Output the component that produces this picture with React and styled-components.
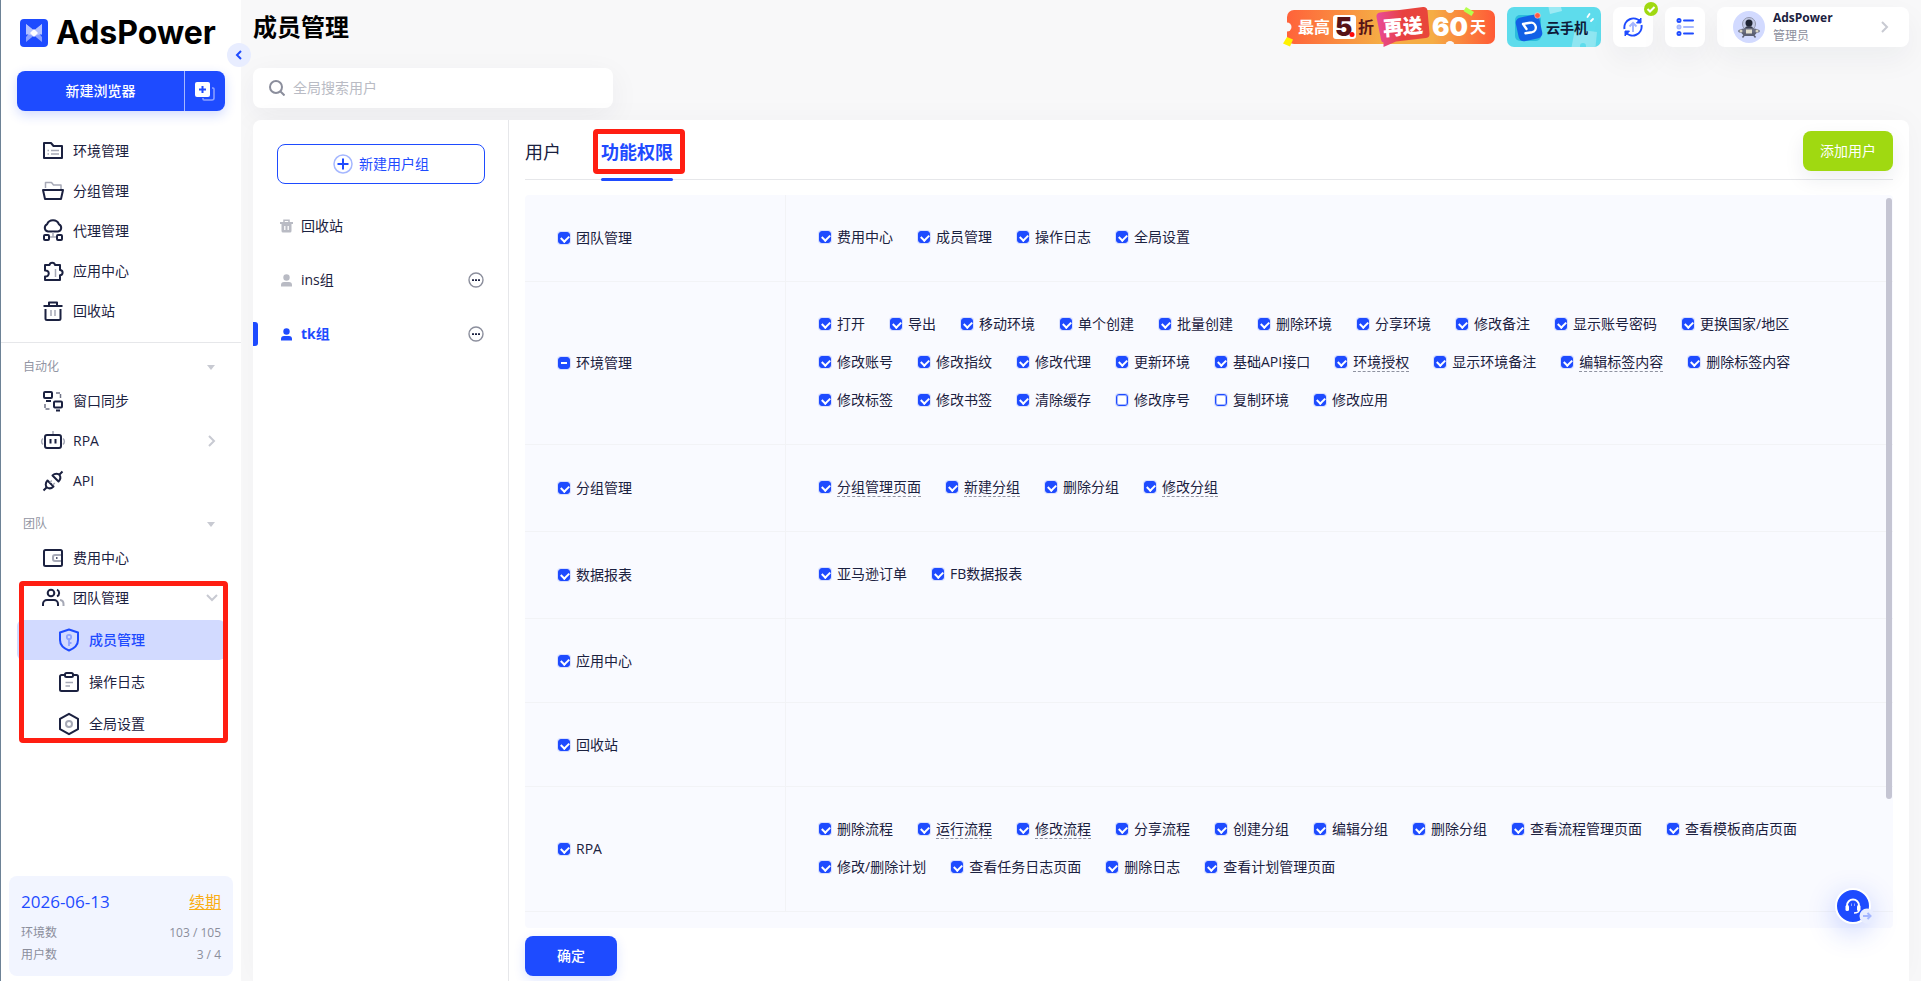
import { useState } from "react";
import styled, { createGlobalStyle, css } from "styled-components";

const BLUE = "#1e4bff";
const DARK = "#1b2140";
const GREY = "#a6a9b6";

const GlobalStyle = createGlobalStyle`
    * {
        box-sizing: border-box;
    }
    body {
        margin: 0;
        background-color: #f8f8f9;
        color: ${DARK};
        font-family: "Open Sans", "Noto Sans CJK SC", sans-serif;
        font-size: 14px;
        line-height: 20px;
    }
    button, input {
        font: inherit;
    }
    button {
        padding: 0;
        border: none;
        background: none;
        color: inherit;
        cursor: pointer;
    }
    a {
        color: inherit;
        text-decoration: none;
    }
    svg {
        display: block;
        flex: none;
    }
`;

const Page = styled.div`
    display: flex;
    height: 100vh;
`;

/* ---------- sidebar ---------- */

const Sidebar = styled.aside`
    position: relative;
    display: flex;
    flex-direction: column;
    width: 241px;
    flex: none;
    background-color: white;
    border-left: 1px solid #6d8296;
`;

const Brand = styled.div`
    display: flex;
    align-items: center;
    gap: 8px;
    height: 71px;
    padding: 0 19px 5px;
`;

const BrandName = styled.span`
    font-family: Inter, sans-serif;
    font-size: 32px;
    font-weight: 700;
    line-height: 40px;
    color: black;
`;

const Collapse = styled.button`
    position: absolute;
    top: 43px;
    right: -10px;
    z-index: 2;
    display: flex;
    align-items: center;
    justify-content: center;
    width: 24px;
    height: 24px;
    border-radius: 50%;
    background-color: #e8edff;
`;

const NewBrowser = styled.div`
    display: flex;
    height: 40px;
    margin: 0 16px 20px;
    border-radius: 8px;
    background-color: ${BLUE};
    color: white;
    box-shadow: 0 4px 12px rgba(30, 75, 255, 0.2);
`;

const NewBrowserMain = styled.button`
    flex: 1;
    font-weight: 500;
`;

const NewBrowserBatch = styled.button`
    display: flex;
    align-items: center;
    justify-content: center;
    width: 41px;
    border-left: 1px solid #a5b7ff;
`;

const NavItem = styled.a`
    display: flex;
    align-items: center;
    gap: 10px;
    height: 40px;
    padding: 0 20px 0 42px;
`;

const NavLabel = styled.span`
    flex: 1;
`;

const Divider = styled.hr`
    width: 100%;
    margin: 11px 0 1px;
    border: none;
    border-top: 1px solid #e6e7ea;
`;

const SectionTitle = styled.button`
    display: flex;
    align-items: center;
    justify-content: space-between;
    height: 28px;
    margin-top: 9px;
    padding: 0 26px 0 22px;
    font-size: 12px;
    color: #9295a3;
`;

const SubMenu = styled.div`
    display: flex;
    flex-direction: column;
    gap: 2px;
    padding: 2px 16px;
`;

const SubItem = styled.a`
    display: flex;
    align-items: center;
    gap: 10px;
    height: 40px;
    padding-left: 42px;
    border-radius: 6px;
    ${({ $active }) => $active && css`
        background-color: #d2daff;
        color: ${BLUE};
        font-weight: 500;
    `}
`;

const TeamGroup = styled.div`
    position: relative;
`;

const RedFrame = styled.span`
    position: absolute;
    inset: ${({ $inset }) => $inset};
    border: 5px solid #ff1e12;
    border-radius: 4px;
    pointer-events: none;
`;

const PlanCard = styled.div`
    margin: auto 8px 5px;
    padding: 15px 12px 10px;
    border-radius: 8px;
    background-color: #f2f5ff;
    font-size: 12px;
    line-height: 22px;
    color: #8b8e9c;
`;

const PlanRow = styled.div`
    display: flex;
    justify-content: space-between;
`;

const PlanHead = styled(PlanRow)`
    margin-bottom: 9px;
    font-size: 17px;
    color: ${BLUE};
`;

const Renew = styled.a`
    font-size: 16px;
    color: #faad14;
    text-decoration: underline;
`;

/* ---------- header ---------- */

const Main = styled.main`
    display: flex;
    flex-direction: column;
    flex: 1;
    min-width: 0;
    padding: 0 12px;
`;

const Header = styled.header`
    display: flex;
    align-items: center;
    gap: 12px;
    height: 54px;
`;

const Title = styled.h1`
    flex: 1;
    margin: 0;
    font-size: 24px;
    line-height: 32px;
    font-weight: 700;
    color: black;
`;

const HeaderButton = styled.button`
    position: relative;
    display: flex;
    align-items: center;
    justify-content: center;
    width: 40px;
    height: 40px;
    border-radius: 8px;
    background-color: white;
    box-shadow: 0 12px 30px rgba(27, 33, 64, 0.05);
`;

const OkBadge = styled.span`
    position: absolute;
    top: -5px;
    right: -5px;
`;

const Profile = styled.button`
    display: flex;
    align-items: center;
    gap: 8px;
    width: 192px;
    height: 40px;
    padding: 0 20px 0 16px;
    border-radius: 8px;
    background-color: white;
    box-shadow: 0 12px 30px rgba(27, 33, 64, 0.05);
    text-align: left;
`;

const ProfileText = styled.span`
    display: flex;
    flex-direction: column;
    flex: 1;
    font-size: 12px;
    line-height: 18px;
    color: #8b8e9c;
    strong {
        color: ${DARK};
    }
`;

const Search = styled.label`
    display: flex;
    align-items: center;
    gap: 8px;
    width: 360px;
    height: 40px;
    margin: 14px 0 12px;
    padding: 0 16px;
    border-radius: 8px;
    background-color: white;
    box-shadow: 0 8px 30px rgba(27, 33, 64, 0.06);
    input {
        flex: 1;
        min-width: 0;
        padding: 0;
        border: none;
        outline: none;
        background: none;
    }
    input::placeholder {
        color: #b9bbc4;
    }
`;

/* ---------- body ---------- */

const Panel = styled.section`
    display: flex;
    flex: 1;
    min-height: 0;
    border-radius: 8px 8px 0 0;
    background-color: white;
    box-shadow: 0 0 30px rgba(27, 33, 64, 0.03);
`;

const Groups = styled.div`
    width: 256px;
    flex: none;
    padding: 24px 0;
    border-right: 1px solid #e6e7ea;
`;

const NewGroup = styled.button`
    display: flex;
    align-items: center;
    justify-content: center;
    gap: 6px;
    width: 208px;
    height: 40px;
    margin: 0 24px 15px;
    border: 1px solid ${BLUE};
    border-radius: 8px;
    color: ${BLUE};
`;

const GroupItem = styled.div`
    position: relative;
    display: flex;
    align-items: center;
    gap: 8px;
    height: 54px;
    padding: 0 24px 0 27px;
    ${({ $active }) => $active && css`
        color: ${BLUE};
        font-weight: 700;
        &::before {
            content: "";
            position: absolute;
            left: 0;
            width: 5px;
            height: 24px;
            border-radius: 0 3px 3px 0;
            background-color: ${BLUE};
        }
    `}
`;

const Content = styled.div`
    display: flex;
    flex-direction: column;
    flex: 1;
    min-width: 0;
    padding: 0 16px 5px;
`;

const TabBar = styled.div`
    display: flex;
    align-items: center;
    gap: 40px;
    height: 60px;
    margin-bottom: 15px;
    padding-top: 4px;
    border-bottom: 1px solid #e6e7ea;
`;

const Tab = styled.button`
    position: relative;
    font-size: 18px;
    line-height: 26px;
    ${({ $active }) => $active && css`
        color: ${BLUE};
        font-weight: 700;
        &::after {
            content: "";
            position: absolute;
            left: 0;
            right: 0;
            bottom: -16px;
            height: 3px;
            border-radius: 2px;
            background-color: ${BLUE};
        }
    `}
`;

const AddUser = styled.button`
    width: 90px;
    height: 40px;
    margin-left: auto;
    margin-bottom: 1px;
    border-radius: 8px;
    background-color: #a0d911;
    color: white;
    box-shadow: 0 8px 20px rgba(27, 33, 64, 0.08);
`;

const Permissions = styled.div`
    position: relative;
    flex: 1;
    min-height: 0;
    overflow: hidden;
    border-radius: 4px;
    background-color: #f9faff;
`;

const Thumb = styled.div`
    position: absolute;
    top: 3px;
    right: 1px;
    width: 6px;
    height: 82%;
    border-radius: 3px;
    background-color: #c5c5d3;
`;

const Options = styled.div`
    display: flex;
    flex-wrap: wrap;
    column-gap: 25px;
`;

const CheckLabel = styled.label`
    display: flex;
    align-items: center;
    gap: 6px;
    height: 38px;
    white-space: nowrap;
`;

const Table = styled.table`
    width: 100%;
    border-collapse: separate;
    border-spacing: 0;
    th, td {
        height: 84px;
        border-bottom: 1px solid #f2f3f6;
        font-weight: 400;
        text-align: left;
    }
    th {
        width: 261px;
        padding: 0 33px;
        border-right: 1px solid #f2f3f6;
    }
    td {
        padding: 23px 32px 25px 33px;
    }
`;

const Check = styled.input`
    position: relative;
    appearance: none;
    width: 12px;
    height: 12px;
    margin: 0;
    border: 1px solid ${BLUE};
    border-radius: 3px;
    background-color: white;
    box-shadow: 0 0 0 1px rgba(30, 75, 255, 0.15), inset 0 0 0 1px rgba(30, 75, 255, 0.4);
    &:checked, &:indeterminate {
        background-color: ${BLUE};
    }
    &:checked::after {
        content: "";
        position: absolute;
        left: 3px;
        top: 1px;
        width: 4px;
        height: 6px;
        border: solid white;
        border-width: 0 2px 2px 0;
        transform: rotate(45deg);
    }
    &:indeterminate::after {
        content: "";
        position: absolute;
        left: 2px;
        top: 4px;
        width: 6px;
        height: 2px;
        background-color: white;
    }
`;

const CheckText = styled.span`
    border-bottom: 1px dashed ${({ $hint }) => ($hint ? "#8f92a0" : "transparent")};
    border-top: 1px solid transparent;
    line-height: 18px;
`;

const Confirm = styled.button`
    width: 92px;
    height: 40px;
    margin-top: 8px;
    border-radius: 8px;
    background-color: ${BLUE};
    color: white;
    font-weight: 500;
    box-shadow: 0 4px 12px rgba(30, 75, 255, 0.15);
`;

const Support = styled.button`
    position: fixed;
    right: 50px;
    bottom: 57px;
    width: 36px;
    height: 36px;
    border: 2px solid white;
    border-radius: 50%;
    background-color: ${BLUE};
    box-shadow: 0 8px 28px rgba(30, 75, 255, 0.25);
    svg {
        position: absolute;
        left: 0;
        top: 0;
    }
`;

/* ---------- icons ---------- */

const shapes = {
    env: (
        <>
            <path d="M1 2h7l2.500 3H19v12H1z" />
            <path d="M8 9.500h8M8 13h8M4.500 9.500h1.500M4.500 13h1.500" stroke={GREY} strokeWidth="1.500" />
        </>
    ),
    folder: (
        <>
            <path d="M2.500 7V1.500h6l2 2.500h7.500V8" stroke={GREY} strokeWidth="1.500" />
            <path d="M0 9h20l-2 9H2z" />
        </>
    ),
    proxy: (
        <>
            <path d="M5 10.500a3.800 3.800 0 0 1-1-7.200 6.500 6.500 0 0 1 12 0 3.800 3.800 0 0 1-1 7.200z" />
            <path d="M10 11v5M7 16h6" stroke={GREY} strokeWidth="1.500" />
            <rect x="1" y="14" width="5" height="5" rx="1" />
            <rect x="14" y="14" width="5" height="5" rx="1" />
        </>
    ),
    app: (
        <>
            <path d="M2 4h4.500a2.800 2.800 0 0 1 5.500 0H17v5a2.600 2.600 0 0 1 0 5.200V19H2v-3.500c5 .5 5-6.500 0-6z" />
            <path d="M12.500 8v8" stroke={GREY} strokeWidth="1.500" />
        </>
    ),
    bin: (
        <>
            <path d="M0.500 5h19M6 4V1.500h8V4M2.500 8v9.500A1.500 1.500 0 0 0 4 19h12a1.500 1.500 0 0 0 1.500-1.500V8" />
            <path d="M8 9v6M12 9v6" stroke={GREY} strokeWidth="1.500" />
        </>
    ),
    sync: (
        <>
            <rect x="1" y="1" width="8" height="6" rx="1" />
            <rect x="11" y="10.500" width="8" height="6" rx="1" />
            <path d="M3 10h5M13 19.500h4" />
            <path d="M13 2h4.500v5M2 13v5h5" stroke="#6f7386" strokeDasharray="4 1.500" strokeWidth="1.500" />
        </>
    ),
    rpa: (
        <>
            <path d="M10 0v4M0 7.500a4 4 0 0 0 0 6M20 7.500a4 4 0 0 1 0 6" stroke={GREY} strokeWidth="1.500" />
            <rect x="2" y="4" width="16" height="13" rx="2" />
            <path d="M7.500 8v4.500M12.500 8v4.500" />
        </>
    ),
    api: (
        <>
            <path d="M0.500 19.500l3-3M16.500 3.500l3-3" />
            <path d="M4.500 9.500l6 6c-2.500 2.500-5 2-6.500 1s-2-4.500.5-7z" />
            <path d="M9.500 4.500l6 6c2.500-2.500 2-5 1-6.500s-4.500-2-7 .5z" />
            <path d="M6.800 11.500l2-2M9.800 14l2-2" stroke={GREY} strokeWidth="1.500" />
        </>
    ),
    wallet: (
        <>
            <rect x="1" y="2" width="18" height="16" rx="1.500" />
            <path d="M18 7h-6a2 2 0 0 0-2 2v2a2 2 0 0 0 2 2h6" stroke={GREY} />
            <path d="M13 10h1.500" strokeWidth="1.500" />
        </>
    ),
    team: (
        <>
            <circle cx="8" cy="5" r="3.300" />
            <path d="M0 18v-2a4 4 0 0 1 4-4h7a4 4 0 0 1 4 4v2M14 1.700a3.600 3.600 0 0 1 0 6.600" />
            <path d="M17 12a4 4 0 0 1 3.500 4v2" stroke={GREY} />
        </>
    ),
    member: (
        <>
            <path d="M10-.5l9 3v7.500c0 5-4 8.500-9 10.500-5-2-9-5.500-9-10.500V2.500z" />
            <g stroke="#8ea3ff" strokeWidth="1.800">
                <circle cx="10" cy="7" r="2.200" />
                <path d="M10 9.500V16M10 13h2.500" />
            </g>
        </>
    ),
    log: (
        <>
            <path d="M6 3H2.500A1.500 1.500 0 0 0 1 4.500v13A1.500 1.500 0 0 0 2.500 19h15a1.500 1.500 0 0 0 1.500-1.500v-13A1.500 1.500 0 0 0 17.500 3H14" />
            <rect x="6" y="1" width="8" height="4" rx="1.500" />
            <path d="M6.500 10.500h7.500M6.500 14h4.500" stroke={GREY} strokeWidth="1.500" />
        </>
    ),
    setting: (
        <>
            <path d="M10-.2l9 5v10.400l-9 5-9-5V4.800z" />
            <circle cx="10" cy="10" r="3" stroke={GREY} />
        </>
    ),
};

const Icon = ({ name, color = DARK }) => (
    <svg width="20" height="20" viewBox="0 0 20 20" overflow="visible" fill="none" stroke={color} strokeWidth="2" strokeLinejoin="round">
        {shapes[name]}
    </svg>
);

const Chevron = ({ d, width, height, color = "#c8cad2" }) => (
    <svg width={width} height={height} viewBox={`0 0 ${width} ${height}`} fill="none" stroke={color} strokeWidth="2">
        <path d={d} />
    </svg>
);

const Caret = () => (
    <svg width="8" height="5" viewBox="0 0 8 5" fill="#c8cad2"><path d="M0 0h8L4 5z" /></svg>
);

// butterfly made of two translucent wings folded over each other
const Logo = () => (
    <svg width="28" height="28" viewBox="0 0 28 28">
        <rect width="28" height="28" rx="4" fill={BLUE} />
        <path d="M6 5l8 6.500L22 5v11l-3.500-2L22 18v5l-8-6.500L6 23v-5l3.500-4L6 16z" fill="#8aa0ff" />
        <path d="M6 5l8 6.500L22 5v10l-8 2-8-2z" fill="#b4c2ff" />
        <path d="M10 14l4-4 4 4-4 4z" fill="white" />
    </svg>
);

const PersonIcon = ({ color }) => (
    <svg width="13" height="13" viewBox="0 0 13 13" fill={color}>
        <circle cx="6.500" cy="3.500" r="3.200" />
        <path d="M1 12.500v-1.500a3 3 0 0 1 3-3h5a3 3 0 0 1 3 3v1.500z" />
    </svg>
);

const TrashIcon = () => (
    <svg width="13" height="14" viewBox="0 0 13 14" fill="none" stroke="#b9bbc4">
        <path d="M4 3V1.200h5V3" strokeWidth="1.500" />
        <path d="M0 4h13" strokeWidth="2" />
        <path d="M1.500 4.500h10V12a1.500 1.500 0 0 1-1.500 1.500H3A1.500 1.500 0 0 1 1.500 12z" fill="#b9bbc4" stroke="none" />
        <path d="M4.800 7v4M8.200 7v4" stroke="white" strokeWidth="1.300" />
    </svg>
);

const MoreIcon = () => (
    <svg width="16" height="16" viewBox="0 0 16 16">
        <circle cx="8" cy="8" r="7" fill="none" stroke="#8b8e9c" strokeWidth="1.400" />
        <path d="M4 7.200h2v1.700H4zM7 7.200h2v1.700H7zM10 7.200h2v1.700h-2z" fill={DARK} />
    </svg>
);

const PromoBanner = () => (
    <svg width="212" height="40" viewBox="0 0 212 40" overflow="visible" fontFamily="Inter, 'Noto Sans CJK SC', sans-serif" fontWeight="700">
        <defs>
            <linearGradient id="bar">
                <stop offset="0" stopColor="#ff623a" />
                <stop offset="0.450" stopColor="#f5ad45" />
                <stop offset="0.700" stopColor="#f5ad45" />
                <stop offset="1" stopColor="#ff5a36" />
            </linearGradient>
            <linearGradient id="tag">
                <stop offset="0" stopColor="#e84a9c" />
                <stop offset="0.500" stopColor="#e8413f" />
                <stop offset="1" stopColor="#e8463a" />
            </linearGradient>
        </defs>
        <rect x="4" y="3" width="208" height="34" rx="7" fill="url(#bar)" />
        <g fill="#f8f8f9">
            <circle cx="4" cy="20" r="4.500" />
            <circle cx="167" cy="1.500" r="4.500" />
            <circle cx="167" cy="38.500" r="4.500" />
        </g>
        <path d="M4 30l6 2.500-3 7-7-3z" fill="#fff200" />
        <path d="M183 0l8 5-2.500 4-8-5z" fill="#b6ff4d" />
        <text x="15" y="26" fontSize="16" fill="white">最高</text>
        <rect x="50" y="8" width="23" height="24" rx="3" fill="white" />
        <text x="52" y="29" fontSize="26" fontWeight="900" fill="#571317">5</text>
        <circle cx="69" cy="27.500" r="2.500" fill="#ff0a0a" />
        <text x="75" y="26" fontSize="16" fill="#571317">折</text>
        <path d="M97 5.500l43-5.500q4-.3 4.500 3.500l2 23q.3 4-3.500 4.500l-30 3.500-12.500 5.500v-4.500q-2 0-2.500-3L93.500 10q-.5-4 3.500-4.500z" fill="url(#tag)" />
        <text x="100" y="27" fontSize="20" fontWeight="900" fill="white" transform="rotate(-5 120 20)">再送</text>
        <text x="149" y="29" fontSize="26" fontWeight="900" fill="white">60</text>
        <text x="187" y="26" fontSize="16" fill="white">天</text>
    </svg>
);

const CloudPhone = () => (
    <svg width="94" height="40" viewBox="0 0 94 40">
        <defs>
            <clipPath id="card"><rect width="94" height="40" rx="7" /></clipPath>
        </defs>
        <g clipPath="url(#card)">
            <rect width="94" height="40" fill="#5edcec" />
            <path d="M41-2l12-2 2 8-12 3z" fill="#9ceaf4" />
            <path d="M68 22l22 3-2 20-24-2z" fill="#8fe6f1" />
            <circle cx="76" cy="39" r="3" fill="#5edcec" />
        </g>
        <rect x="8" y="8" width="26" height="26" rx="5" fill="#2bbcdd" />
        <rect x="10" y="9" width="24" height="24" rx="5" fill="#1260e6" transform="rotate(-12 22 21)" />
        <path d="M16 17l7-1.200a4.800 4.800 0 0 1 2 9.400l-6.500 1M16 17l3.500 5" fill="none" stroke="white" strokeWidth="2.400" strokeLinecap="round" strokeLinejoin="round" />
        <circle cx="30.500" cy="8.500" r="2.800" fill="#ff5a44" stroke="#ffd5cf" strokeWidth=".6" />
        <text x="39" y="26" fontSize="14" fontWeight="700" fontFamily="'Noto Sans CJK SC', sans-serif" fill="#0d1b3a">云手机</text>
        <path d="M80.500 10l2-3M84 14l2-2" stroke="white" strokeWidth="1.800" strokeLinecap="round" />
    </svg>
);

const Avatar = () => (
    <svg width="32" height="32" viewBox="0 0 32 32">
        <circle cx="16" cy="16" r="16" fill="#d2daff" />
        <circle cx="16" cy="13" r="6.500" fill="#c3cae6" stroke="#8f94aa" strokeWidth="1" />
        <circle cx="16" cy="12" r="3.500" fill="#1f2433" />
        <path d="M11 20c.5-4 2.500-5 5-5s4.500 1 5 5z" fill="#3a3f50" />
        <ellipse cx="16" cy="20" rx="11" ry="3" fill="#6b6f82" />
        <path d="M8 21.500h16l-3 3.500H11z" fill="#5c6072" />
        <path d="M13 18.500h6v4h-6z" fill="#e3dfcf" />
        <circle cx="8" cy="20" r="1.500" fill="#d9d4c2" />
        <circle cx="24" cy="20" r="1.500" fill="#d9d4c2" />
        <path d="M11 24.500l-1.500 2M21 24.500l1.500 2" stroke="#5c6072" strokeWidth="1.500" />
    </svg>
);

/* ---------- data ---------- */

const mainNav = [
    ["env", "环境管理"],
    ["folder", "分组管理"],
    ["proxy", "代理管理"],
    ["app", "应用中心"],
    ["bin", "回收站"],
];

const subNav = [
    ["member", "成员管理"],
    ["log", "操作日志"],
    ["setting", "全局设置"],
];

// "*" after a name: has a hint, "-" after a name: not granted
const permissions = [
    ["团队管理", "费用中心 成员管理 操作日志 全局设置"],
    ["环境管理", "打开 导出 移动环境 单个创建 批量创建 删除环境 分享环境 修改备注 显示账号密码 更换国家/地区 修改账号 修改指纹 修改代理 更新环境 基础API接口 环境授权* 显示环境备注 编辑标签内容* 删除标签内容 修改标签 修改书签 清除缓存 修改序号- 复制环境- 修改应用"],
    ["分组管理", "分组管理页面* 新建分组* 删除分组 修改分组*"],
    ["数据报表", "亚马逊订单 FB数据报表"],
    ["应用中心", ""],
    ["回收站", ""],
    ["RPA", "删除流程 运行流程* 修改流程* 分享流程 创建分组 编辑分组 删除分组 查看流程管理页面 查看模板商店页面 修改/删除计划 查看任务日志页面 删除日志 查看计划管理页面"],
].map(([name, items]) => ({
    name,
    items: items.split(" ").filter(Boolean).map((item) => ({
        name: item.replace(/[*-]$/, ""),
        hint: item.endsWith("*"),
        checked: !item.endsWith("-"),
    })),
}));

const PermissionRow = ({ row }) => {
    const [items, setItems] = useState(row.items);
    const [empty, setEmpty] = useState(true);
    const all = items.length ? items.every((i) => i.checked) : empty;
    const some = items.some((i) => i.checked);

    const toggleAll = () => {
        setEmpty(!empty);
        setItems(items.map((i) => ({ ...i, checked: !all })));
    };
    const toggle = (index) => {
        setItems(items.map((i, n) => (n === index ? { ...i, checked: !i.checked } : i)));
    };

    return (
        <tr>
            <th scope="row">
                <CheckLabel>
                    <Check
                        type="checkbox"
                        checked={all}
                        onChange={toggleAll}
                        ref={(el) => { if (el) el.indeterminate = some && !all; }}
                    />
                    <CheckText>{row.name}</CheckText>
                </CheckLabel>
            </th>
            <td>
                <Options>
                    {items.map((item, index) => (
                        <CheckLabel key={item.name}>
                            <Check type="checkbox" checked={item.checked} onChange={() => toggle(index)} />
                            <CheckText $hint={item.hint}>{item.name}</CheckText>
                        </CheckLabel>
                    ))}
                </Options>
            </td>
        </tr>
    );
};

const SideMenu = () => (
    <Sidebar>
        <Brand>
            <Logo />
            <BrandName>AdsPower</BrandName>
        </Brand>
        <Collapse aria-label="收起">
            <Chevron d="M6 1L2 5l4 4" width={8} height={10} color={BLUE} />
        </Collapse>
        <NewBrowser>
            <NewBrowserMain>新建浏览器</NewBrowserMain>
            <NewBrowserBatch aria-label="批量新建">
                <svg width="20" height="20" viewBox="0 0 20 20" fill="none">
                    <path d="M17 7h1a1 1 0 0 1 1 1v9a2 2 0 0 1-2 2H9a1 1 0 0 1-1-1v-1" stroke="#8ea3ff" strokeWidth="1.500" />
                    <rect width="15" height="15" x="0" y="1" rx="2" fill="white" />
                    <path d="M7.500 5v7M4 8.500h7" stroke={BLUE} strokeWidth="2" />
                </svg>
            </NewBrowserBatch>
        </NewBrowser>
        {mainNav.map(([icon, label]) => (
            <NavItem href="#" key={label}>
                <Icon name={icon} />
                <NavLabel>{label}</NavLabel>
            </NavItem>
        ))}
        <Divider />
        <SectionTitle>自动化<Caret /></SectionTitle>
        <NavItem href="#"><Icon name="sync" /><NavLabel>窗口同步</NavLabel></NavItem>
        <NavItem href="#">
            <Icon name="rpa" />
            <NavLabel>RPA</NavLabel>
            <Chevron d="M1 1l5 5-5 5" width={13} height={12} />
        </NavItem>
        <NavItem href="#"><Icon name="api" /><NavLabel>API</NavLabel></NavItem>
        <SectionTitle>团队<Caret /></SectionTitle>
        <NavItem href="#"><Icon name="wallet" /><NavLabel>费用中心</NavLabel></NavItem>
        <TeamGroup>
            <NavItem href="#">
                <Icon name="team" />
                <NavLabel>团队管理</NavLabel>
                <Chevron d="M2 1l5 5 5-5" width={16} height={8} />
            </NavItem>
            <SubMenu>
                {subNav.map(([icon, label]) => (
                    <SubItem href="#" key={label} $active={icon === "member"}>
                        <Icon name={icon} color={icon === "member" ? BLUE : DARK} />
                        {label}
                    </SubItem>
                ))}
            </SubMenu>
            <RedFrame $inset="3px 13px 3px 18px" />
        </TeamGroup>
        <PlanCard>
            <PlanHead>2026-06-13<Renew href="#">续期</Renew></PlanHead>
            <PlanRow><span>环境数</span><span>103 / 105</span></PlanRow>
            <PlanRow><span>用户数</span><span>3 / 4</span></PlanRow>
        </PlanCard>
    </Sidebar>
);

const TopBar = () => (
    <Header>
        <Title>成员管理</Title>
        <a href="#" aria-label="优惠活动"><PromoBanner /></a>
        <a href="#" aria-label="云手机"><CloudPhone /></a>
        <HeaderButton aria-label="更新">
            <svg width="20" height="20" viewBox="0 0 20 20" fill="none" stroke={BLUE} strokeWidth="2">
                <path d="M17.500 5A9 9 0 0 0 1.500 12M2.500 15a9 9 0 0 0 16-7" />
                <path d="M18 1v5h-4.500zM2 19v-5h4.500z" fill={BLUE} strokeWidth="1" />
                <path d="M10 15V6M6.500 9.500L10 6l3.500 3.500" stroke="#a5b7ff" />
            </svg>
            <OkBadge>
                <svg width="14" height="14" viewBox="0 0 14 14">
                    <circle cx="7" cy="7" r="7" fill="#a0d911" />
                    <path d="M3.500 7l2.500 2.500 4.500-4.500" fill="none" stroke="white" strokeWidth="2" />
                </svg>
            </OkBadge>
        </HeaderButton>
        <HeaderButton aria-label="列表">
            <svg width="18" height="18" viewBox="0 0 18 18" fill="none" stroke={BLUE} strokeWidth="2" strokeLinecap="round">
                <circle cx="3" cy="2.500" r="1.500" />
                <path d="M8 2.500h9M8 15.500h9" />
                <circle cx="3" cy="15.500" r="1.500" />
                <g stroke="#a5b7ff"><circle cx="3" cy="9" r="1.500" /><path d="M8 9h9" /></g>
            </svg>
        </HeaderButton>
        <Profile>
            <Avatar />
            <ProfileText><strong>AdsPower</strong>管理员</ProfileText>
            <Chevron d="M1 1l5 5-5 5" width={8} height={12} />
        </Profile>
    </Header>
);

const GroupList = () => (
    <Groups>
        <NewGroup>
            <svg width="20" height="20" viewBox="0 0 20 20" fill="none">
                <circle cx="10" cy="10" r="9" stroke="#a5b7ff" strokeWidth="1.500" />
                <path d="M10 4.500v11M4.500 10h11" stroke={BLUE} strokeWidth="2" />
            </svg>
            新建用户组
        </NewGroup>
        <GroupItem><TrashIcon /><NavLabel>回收站</NavLabel></GroupItem>
        <GroupItem>
            <PersonIcon color="#b9bbc4" />
            <NavLabel>ins组</NavLabel>
            <button aria-label="更多"><MoreIcon /></button>
        </GroupItem>
        <GroupItem $active>
            <PersonIcon color={BLUE} />
            <NavLabel>tk组</NavLabel>
            <button aria-label="更多"><MoreIcon /></button>
        </GroupItem>
    </Groups>
);

export default function App() {
    return (
        <Page>
            <GlobalStyle />
            <SideMenu />
            <Main>
                <TopBar />
                <Search>
                    <svg width="16" height="16" viewBox="0 0 16 16" fill="none" stroke="#8b8e9c" strokeWidth="2">
                        <circle cx="7" cy="7" r="6" />
                        <path d="M11.500 11.500l4 4" />
                    </svg>
                    <input type="text" placeholder="全局搜索用户" aria-label="全局搜索用户" />
                </Search>
                <Panel>
                    <GroupList />
                    <Content>
                        <TabBar>
                            <Tab>用户</Tab>
                            <Tab $active>
                                功能权限
                                <RedFrame $inset="-10px -12px -9px -8px" />
                            </Tab>
                            <AddUser>添加用户</AddUser>
                        </TabBar>
                        <Permissions>
                            <Table>
                                <tbody>
                                    {permissions.map((row) => <PermissionRow key={row.name} row={row} />)}
                                </tbody>
                            </Table>
                            <Thumb />
                        </Permissions>
                        <Confirm>确定</Confirm>
                    </Content>
                </Panel>
            </Main>
            <Support aria-label="客服">
                <svg width="40" height="40" viewBox="0 0 40 40" fill="none">
                    <path d="M10 17v-1.500a6 6 0 0 1 12 0V17" stroke="white" strokeWidth="1.800" />
                    <rect x="8.500" y="15" width="3.500" height="6" rx="1.500" fill="white" />
                    <rect x="20" y="15" width="3.500" height="6" rx="1.500" fill="white" />
                    <path d="M22 20c0 2-2 3-5 3" stroke="white" strokeWidth="1.500" />
                    <path d="M14.500 13.500v2.500M17.500 13.500v2.500" stroke="#8ea3ff" />
                    <circle cx="30" cy="26" r="7.500" fill="#e8edff" />
                    <path d="M26 26h7M30.500 23l3 3-3 3" stroke="#a5b7ff" strokeWidth="2" />
                </svg>
            </Support>
        </Page>
    );
}
